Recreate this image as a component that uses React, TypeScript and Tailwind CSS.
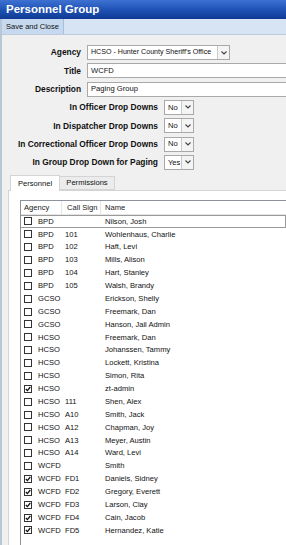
import React from 'react';

type Person = {
  agency: string;
  callSign: string;
  name: string;
  checked?: boolean;
};

const people: Person[] = [
  { agency: 'BPD', callSign: '', name: 'Nilson, Josh' },
  { agency: 'BPD', callSign: '101', name: 'Wohlenhaus, Charlie' },
  { agency: 'BPD', callSign: '102', name: 'Haft, Levi' },
  { agency: 'BPD', callSign: '103', name: 'Mills, Alison' },
  { agency: 'BPD', callSign: '104', name: 'Hart, Stanley' },
  { agency: 'BPD', callSign: '105', name: 'Walsh, Brandy' },
  { agency: 'GCSO', callSign: '', name: 'Erickson, Shelly' },
  { agency: 'GCSO', callSign: '', name: 'Freemark, Dan' },
  { agency: 'GCSO', callSign: '', name: 'Hanson, Jail Admin' },
  { agency: 'HCSO', callSign: '', name: 'Freemark, Dan' },
  { agency: 'HCSO', callSign: '', name: 'Johanssen, Tammy' },
  { agency: 'HCSO', callSign: '', name: 'Lockett, Kristina' },
  { agency: 'HCSO', callSign: '', name: 'Simon, Rita' },
  { agency: 'HCSO', callSign: '', name: 'zt-admin', checked: true },
  { agency: 'HCSO', callSign: '111', name: 'Shen, Alex' },
  { agency: 'HCSO', callSign: 'A10', name: 'Smith, Jack' },
  { agency: 'HCSO', callSign: 'A12', name: 'Chapman, Joy' },
  { agency: 'HCSO', callSign: 'A13', name: 'Meyer, Austin' },
  { agency: 'HCSO', callSign: 'A14', name: 'Ward, Levi' },
  { agency: 'WCFD', callSign: '', name: 'Smith' },
  { agency: 'WCFD', callSign: 'FD1', name: 'Daniels, Sidney', checked: true },
  { agency: 'WCFD', callSign: 'FD2', name: 'Gregory, Everett', checked: true },
  { agency: 'WCFD', callSign: 'FD3', name: 'Larson, Clay', checked: true },
  { agency: 'WCFD', callSign: 'FD4', name: 'Cain, Jacob', checked: true },
  { agency: 'WCFD', callSign: 'FD5', name: 'Hernandez, Katie', checked: true },
];

function Arrow() {
  return (
    <div className="w-[12px] h-full shrink-0 flex items-center justify-center bg-[#f4f4f4] border-l border-[#c8c8c8]">
      <svg width="6" height="4" viewBox="0 0 6 4">
        <path d="M0.5 0.5L3 3L5.5 0.5" fill="none" stroke="#444" strokeWidth="1.1" />
      </svg>
    </div>
  );
}

function Select({ value, width, small }: { value: string; width: string; small?: boolean }) {
  return (
    <div className={`${width} h-[15px] flex bg-white border border-[#a9a9a9]`}>
      <div
        className={`flex-1 min-w-0 flex items-center pl-[3px] ${
          small ? 'text-[7.1px]' : 'text-[7.6px]'
        } text-[#111] whitespace-nowrap overflow-hidden`}
      >
        {value}
      </div>
      <Arrow />
    </div>
  );
}

function TextBox({ value }: { value: string }) {
  return (
    <div className="w-[210px] h-[15px] flex items-center pl-[3px] bg-white border border-[#a9a9a9] text-[7.6px] text-[#111]">
      {value}
    </div>
  );
}

function Checkbox({ checked }: { checked?: boolean }) {
  return (
    <div className="w-[8px] h-[8px] border border-[#333] bg-white flex items-center justify-center shrink-0">
      {checked && (
        <svg width="6" height="6" viewBox="0 0 6 6">
          <path d="M0.8 3L2.4 4.6L5.3 1" fill="none" stroke="#111" strokeWidth="1.3" />
        </svg>
      )}
    </div>
  );
}

function FormRow({
  label,
  labelWidth,
  children,
}: {
  label: string;
  labelWidth: string;
  children: React.ReactNode;
}) {
  return (
    <div className="flex items-center h-[15px]">
      <div className={`${labelWidth} shrink-0 text-right font-bold text-[8.4px] text-[#111] whitespace-nowrap`}>{label}</div>
      <div className="ml-[6px] shrink-0">{children}</div>
    </div>
  );
}

export default function App() {
  return (
    <div className="w-[286px] h-[545px] overflow-hidden bg-[#f0f0f0] font-['Liberation_Sans',Arial,sans-serif]">
      <div className="h-[19px] flex items-center pl-[6px] bg-gradient-to-b from-[#3d72d2] via-[#1f53b6] to-[#0f3a94] text-white font-bold text-[11.5px]">
        Personnel Group
      </div>

      <div className="border-l-2 border-[#b9c6d6] h-[526px] flex flex-col">
        <div className="h-[16px] flex bg-[#d7e4f3] border-b border-[#bccbdd]">
          <div className="w-[62px] h-full flex items-center pl-[4px] bg-[#c7d9ee] border-r border-[#a9bed8] text-[7.5px] text-[#111]">
            Save and Close
          </div>
        </div>

        <div className="mt-[10px] flex flex-col gap-[3.33px]">
          <FormRow label="Agency" labelWidth="w-[79px]">
            <Select value="HCSO - Hunter County Sheriff's Office" width="w-[143px]" small />
          </FormRow>
          <FormRow label="Title" labelWidth="w-[79px]">
            <TextBox value="WCFD" />
          </FormRow>
          <FormRow label="Description" labelWidth="w-[79px]">
            <TextBox value="Paging Group" />
          </FormRow>
          <FormRow label="In Officer Drop Downs" labelWidth="w-[156px]">
            <Select value="No" width="w-[30px]" />
          </FormRow>
          <FormRow label="In Dispatcher Drop Downs" labelWidth="w-[156px]">
            <Select value="No" width="w-[30px]" />
          </FormRow>
          <FormRow label="In Correctional Officer Drop Downs" labelWidth="w-[156px]">
            <Select value="No" width="w-[30px]" />
          </FormRow>
          <FormRow label="In Group Drop Down for Paging" labelWidth="w-[156px]">
            <Select value="Yes" width="w-[30px]" />
          </FormRow>
        </div>

        <div className="mt-[4px] ml-[6px] flex flex-col flex-1">
          <div className="flex items-end h-[16px] pl-[2px]">
            <div className="w-[50px] h-[16px] -mb-px flex items-center justify-center bg-white border border-b-0 border-[#d4d4d4] text-[7.6px] text-[#111] relative">
              Personnel
            </div>
            <div className="w-[55px] h-[14px] flex items-center justify-center bg-[#ececec] border border-l-0 border-[#d4d4d4] text-[7.6px] text-[#111]">
              Permissions
            </div>
          </div>

          <div className="flex-1 bg-white border-t border-l border-[#d4d4d4] pt-[9px] pl-[11px]">
            <div className="h-full border-t border-l border-[#8e939b] flex flex-col">
              <div className="h-[14px] flex items-center border-b border-[#e5e5e5] text-[7.6px] text-[#222]">
                <div className="w-[41px] h-full flex items-center pl-[3px] border-r border-[#e5e5e5]">Agency</div>
                <div className="w-[39px] h-full flex items-center pl-[5px] border-r border-[#e5e5e5]">Call Sign</div>
                <div className="pl-[4px]">Name</div>
              </div>
              {people.map((p, i) => (
                <div
                  key={i}
                  className={`h-[12.875px] flex items-center pl-[3px] text-[7.6px] text-[#111] ${
                    i === 0 ? 'border border-l-0 border-[#9a9a9a]' : ''
                  }`}
                >
                  <Checkbox checked={p.checked} />
                  <div className="w-[27px] ml-[6px]">{p.agency}</div>
                  <div className="w-[40px]">{p.callSign}</div>
                  <div>{p.name}</div>
                </div>
              ))}
            </div>
          </div>
        </div>
      </div>
    </div>
  );
}
